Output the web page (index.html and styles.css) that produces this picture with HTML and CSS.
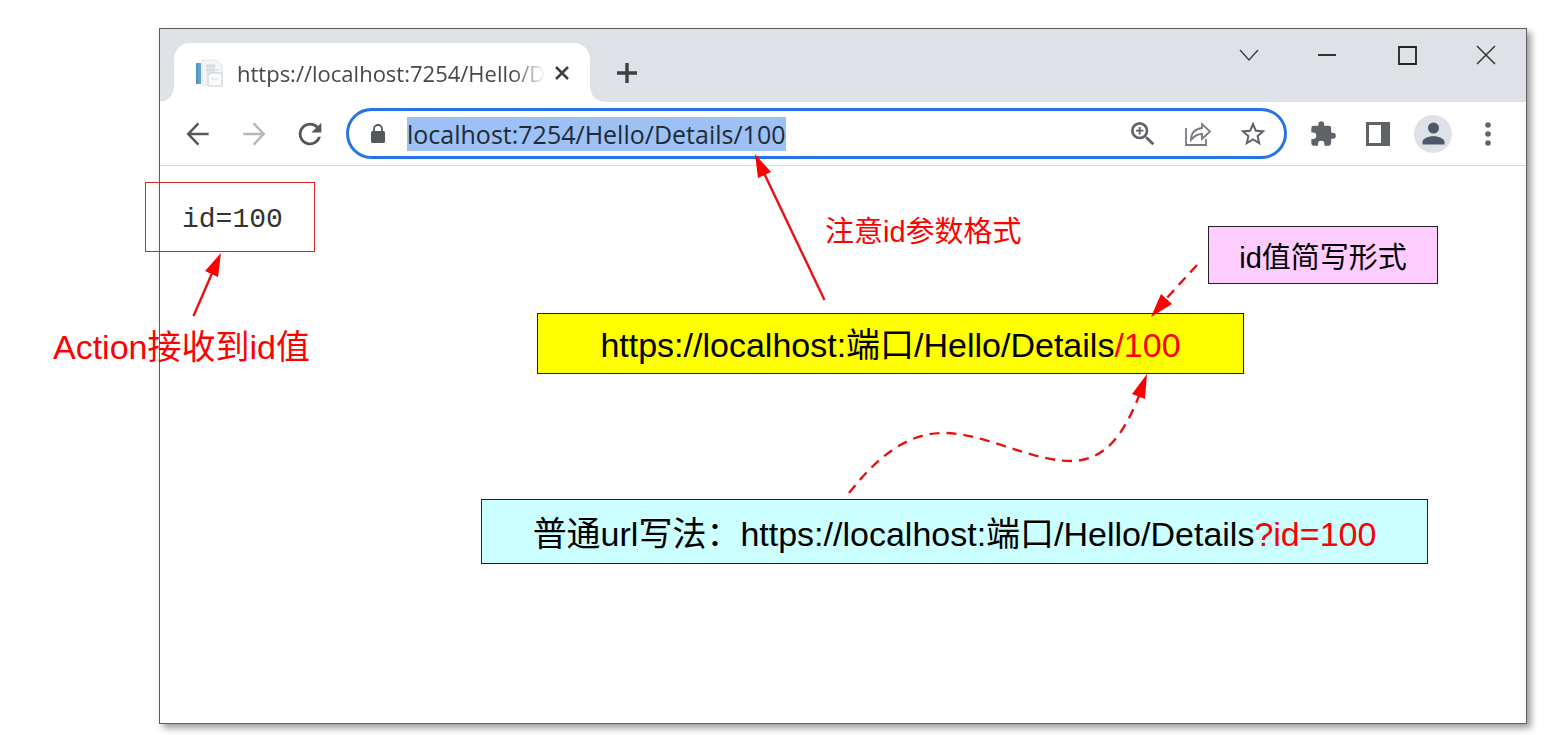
FILE: index.html
```html
<!DOCTYPE html>
<html lang="zh-CN">
<head>
<meta charset="utf-8">
<title>Hello/Details</title>
<link rel="stylesheet" href="styles.css">
</head>
<body>
<main class="stage">
  <section class="window">
    <header class="tabstrip">
      <div class="tab">
        <svg class="favicon" width="28" height="28" viewBox="0 0 28 28" aria-hidden="true">
          <path d="M7 1h14l6 5v20H7z" fill="#f3f5f7" stroke="#e0e3e6"/>
          <path d="M1 4h5v21H1z" fill="#5fa3cf"/>
          <path d="M2 4v21" stroke="#3f83b4" stroke-width="1"/>
          <path d="M11 5h9v10h-9z" fill="#e1e4e8"/>
          <path d="M11 7h10M11 11h12" stroke="#d0d4d8"/>
          <path d="M13 16l3-2h11v13H13z" fill="#fafafa" stroke="#c9cdd1"/>
          <path d="M16 20h7" stroke="#d5d9dc"/>
        </svg>
        <span class="tab-title">https://localhost:7254/Hello/D</span>
        <button class="plain tab-close" aria-label="关闭标签页"><svg width="14" height="14" viewBox="0 0 14 14"><path d="M1 1l12 12M13 1L1 13" stroke="#3c4043" stroke-width="2.600" fill="none"/></svg></button>
      </div>
      <button class="plain new-tab" aria-label="新标签页"><svg width="20" height="20" viewBox="0 0 20 20"><path d="M10 0v20M0 10h20" stroke="#3c4043" stroke-width="3.400" fill="none"/></svg></button>
      <div class="controls">
        <button class="plain control" aria-label="搜索标签页"><svg width="20" height="20" viewBox="0 0 20 20"><path d="M1 5l9 10 9-10" stroke="#3c4043" stroke-width="1.4" fill="none"/></svg></button>
        <button class="plain control" aria-label="最小化"><svg width="20" height="20" viewBox="0 0 20 20"><path d="M0 10h18" stroke="#333" stroke-width="2"/></svg></button>
        <button class="plain control" aria-label="最大化"><svg width="20" height="20" viewBox="0 0 20 20"><path d="M2 2h17v17H2z" stroke="#222" stroke-width="1.800" fill="none"/></svg></button>
        <button class="plain control" aria-label="关闭"><svg width="20" height="20" viewBox="0 0 20 20"><path d="M1 1l18 18M19 1L1 19" stroke="#333" stroke-width="1.5"/></svg></button>
      </div>
    </header>
    <nav class="toolbar">
      <div class="tools history">
        <button class="plain tool" aria-label="后退"><svg width="32" height="32" viewBox="0 0 24 24"><path d="M20 12H5M12.3 4L4.7 12l7.6 8" stroke="#54585c" stroke-width="1.9" fill="none"/></svg></button>
        <button class="plain tool" aria-label="前进"><svg width="32" height="32" viewBox="0 0 24 24"><path d="M4 12h15M11.7 4l7.6 8-7.6 8" stroke="#b4b6b8" stroke-width="1.8" fill="none"/></svg></button>
        <button class="plain tool" aria-label="刷新"><svg width="34" height="34" viewBox="0 0 24 24"><path fill="#54585c" d="M17.65 6.35A7.96 7.96 0 0 0 12 4a8 8 0 1 0 7.73 10h-2.08A6 6 0 1 1 12 6c1.66 0 3.14.69 4.22 1.78L13 11h7V4z"/></svg></button>
      </div>
      <div class="omnibox">
        <svg class="lock" width="24" height="24" viewBox="0 0 24 24" aria-hidden="true"><path d="M8 9V7a4 4 0 0 1 8 0v2" fill="none" stroke="#54585c" stroke-width="1.8"/><rect x="5" y="9" width="14" height="12" rx="1.5" fill="#54585c"/></svg>
        <input class="url" type="text" aria-label="地址栏" value="localhost:7254/Hello/Details/100">
        <div class="tools page-tools">
          <button class="plain tool" aria-label="缩放"><svg width="32" height="32" viewBox="0 0 24 24"><path fill="#5f6368" d="M15.5 14h-.79l-.28-.27A6.47 6.47 0 0 0 16 9.500 6.500 6.500 0 1 0 9.500 16c1.610 0 3.090-.59 4.230-1.570l.27.28v.79l5 4.990L20.490 19zm-6 0a4.500 4.500 0 1 1 0-9 4.500 4.500 0 0 1 0 9zM10.200 6.700H8.800v2.100H6.700v1.400h2.100v2.100h1.400v-2.100h2.100V8.800h-2.100z"/></svg></button>
          <button class="plain tool" aria-label="分享"><svg width="28" height="28" viewBox="0 0 28 28"><path d="M2 8v17h20v-6" fill="none" stroke="#777b7f" stroke-width="1.8"/><path d="M7 20c0-7 4-11 11-12V4l8 7.500-8 7.500v-5c-5 0-8 2-11 6z" fill="none" stroke="#777b7f" stroke-width="1.8"/></svg></button>
          <button class="plain tool" aria-label="收藏"><svg width="30" height="30" viewBox="0 0 24 24"><path fill="#5f6368" d="M22 9.240l-7.190-.62L12 2 9.190 8.630 2 9.240l5.460 4.730L5.820 21 12 17.270 18.180 21l-1.630-7.030zM12 15.400l-3.760 2.270 1-4.280-3.320-2.880 4.380-.38L12 6.100l1.710 4.040 4.380.38-3.320 2.880 1 4.280z"/></svg></button>
        </div>
      </div>
      <div class="tools">
        <button class="plain tool" aria-label="扩展程序"><svg width="28" height="28" viewBox="0 0 24 24"><path fill="#5f6368" d="M20.500 11H19V7a2 2 0 0 0-2-2h-4V3.500a2.500 2.500 0 0 0-5 0V5H4a2 2 0 0 0-2 2v3.800h1.500a2.700 2.700 0 0 1 0 5.400H2V20c0 1.100.9 2 2 2h3.800v-1.500a2.700 2.700 0 0 1 5.400 0V22H17a2 2 0 0 0 2-2v-4h1.500a2.500 2.500 0 0 0 0-5z"/></svg></button>
        <button class="plain tool" aria-label="侧边栏"><svg width="26" height="26" viewBox="0 0 26 26"><path fill="#5f6368" fill-rule="evenodd" d="M1 1h24v24H1zM4 4v18h12V4z"/></svg></button>
        <button class="plain tool" aria-label="个人资料"><span class="avatar"><svg width="33" height="33" viewBox="0 0 24 24"><path fill="#4e586b" d="M12 12a4 4 0 1 0 0-8 4 4 0 0 0 0 8zm0 2c-2.700 0-8 1.300-8 4v2h16v-2c0-2.700-5.300-4-8-4z"/></svg></span></button>
        <button class="plain tool" aria-label="菜单"><svg width="8" height="24" viewBox="0 0 8 24"><g fill="#5f6368"><circle cx="4" cy="3" r="2.800"/><circle cx="4" cy="12" r="2.800"/><circle cx="4" cy="21" r="2.800"/></g></svg></button>
      </div>
    </nav>
    <pre class="page">id=100</pre>
  </section>

  <div class="frame"></div>
  <p class="note large note-action">Action接收到id值</p>
  <p class="note small note-format">注意id参数格式</p>
  <p class="note small box box-short">id值简写形式</p>
  <p class="note large box box-route"><span>https://localhost:端口/Hello/Details<em>/100</em></span></p>
  <p class="note large box box-query"><span>普通url写法：https://localhost:端口/Hello/Details<em>?id=100</em></span></p>
  <svg class="arrows" aria-hidden="true">
    <g fill="none" stroke="#e81010" stroke-width="2.400">
      <path d="M193.500 316L213 271"/>
      <path d="M824.500 300L763 171"/>
      <path d="M1197 265L1165 300" stroke-dasharray="10 7"/>
      <path d="M849 493C875 460 905 433 943 433C985 433 1030 461 1071 461C1110 461 1127 425 1139 396" stroke-dasharray="10 7"/>
    </g>
    <g fill="#f00">
      <path d="M221 253L205 271l13 6z"/>
      <path d="M755 154l3 24 13-6z"/>
      <path d="M1151 317l10-23 11 10z"/>
      <path d="M1147 374l-15 20 13 5z"/>
    </g>
  </svg>
</main>
</body>
</html>
```
FILE: styles.css
```css
* { box-sizing: border-box; }

body {
  margin: 0;
  background: #fff;
  font-family: "Liberation Sans", "Noto Sans CJK SC", sans-serif;
}

.stage {
  position: relative;
  display: flex;
  min-height: 100vh;
  padding: 28px 39px 11px 159px;
}

.window {
  display: flex;
  flex: 1;
  flex-direction: column;
  min-width: 0;
  border: 1px solid #5c5e61;
  background: #fff;
  box-shadow: 4px 4px 7px rgba(0, 0, 0, 0.4);
}

.plain {
  display: flex;
  align-items: center;
  justify-content: center;
  padding: 0;
  border: 0;
  background: none;
}

.plain svg { flex: none; }

.tabstrip {
  display: flex;
  height: 73px;
  padding: 14px 30px 0 14px;
  background: #dee1e6;
}

.tab {
  position: relative;
  display: flex;
  align-items: center;
  width: 416px;
  padding: 0 21px;
  border-radius: 16px 16px 0 0;
  background: #fff;
}

.tab::before,
.tab::after {
  content: "";
  position: absolute;
  bottom: 0;
  width: 14px;
  height: 14px;
}

.tab::before {
  right: 100%;
  background: radial-gradient(circle at 0 0, #dee1e6 13px, #fff 14px);
}

.tab::after {
  left: 100%;
  background: radial-gradient(circle at 100% 0, #dee1e6 13px, #fff 14px);
}

.favicon { flex: none; }

.tab-title {
  margin-left: 14px;
  color: #45484c;
  font: 22px/32px "Open Sans", sans-serif;
  white-space: nowrap;
  mask-image: linear-gradient(to left, transparent, #000 32px);
}

.tab-close { margin-left: auto; }

.new-tab {
  width: 32px;
  margin-left: 21px;
}

.controls {
  display: flex;
  gap: 59px;
  height: 24px;
  margin-left: auto;
}

.control { width: 20px; }

.toolbar {
  display: flex;
  align-items: center;
  gap: 20px;
  height: 64px;
  padding: 0 22px;
  border-bottom: 1px solid #d9d9d9;
}

.tools {
  display: flex;
  gap: 23px;
}

.history { gap: 24px; }

.tool {
  width: 32px;
  height: 32px;
}

.omnibox {
  display: flex;
  flex: 1;
  align-items: center;
  min-width: 0;
  height: 51px;
  padding: 0 15px 0 17px;
  border: 3px solid #2474e5;
  border-radius: 26px;
}

.lock { flex: none; }

.url {
  field-sizing: content;
  min-width: 0;
  height: 34px;
  margin-left: 17px;
  padding: 0;
  border: 0;
  outline: 0;
  background: #9dc1f5;
  color: #202a38;
  font: 25px/32px "Open Sans", sans-serif;
}

.page-tools { margin-left: auto; }

.avatar {
  display: flex;
  flex: none;
  align-items: center;
  justify-content: center;
  width: 38px;
  height: 38px;
  border-radius: 50%;
  background: #dee1e8;
}

.page {
  margin: 0;
  padding: 36px 22px;
  color: #333;
  font: 28px/36px "Liberation Mono", monospace;
}

/* Annotations laid over the window */
.frame {
  position: absolute;
  top: 182px;
  left: 145px;
  width: 170px;
  height: 70px;
  border: 1px solid #d92525;
}

.note {
  position: absolute;
  margin: 0;
  color: #f00;
  white-space: nowrap;
}

.note em {
  color: #f00;
  font-style: normal;
}

.large { font-size: 34px; line-height: 48px; }
.small { font-size: 29px; line-height: 40px; }

.box {
  display: flex;
  align-items: center;
  justify-content: center;
  padding-top: 4px;
  border: 1px solid #222;
  color: #000;
}

.note-action { top: 323px; left: 53px; }
.note-format { top: 212px; left: 825px; }

.box-short {
  top: 226px;
  left: 1208px;
  width: 230px;
  height: 58px;
  padding-top: 6px;
  background: #fcf;
}

.box-route {
  top: 313px;
  left: 537px;
  width: 707px;
  height: 61px;
  padding-top: 2px;
  background: #ff0;
}

.box-query {
  top: 499px;
  left: 481px;
  width: 947px;
  height: 65px;
  background: #cff;
}

.arrows {
  position: absolute;
  top: 0;
  left: 0;
  width: 100%;
  height: 100%;
  pointer-events: none;
}
```
